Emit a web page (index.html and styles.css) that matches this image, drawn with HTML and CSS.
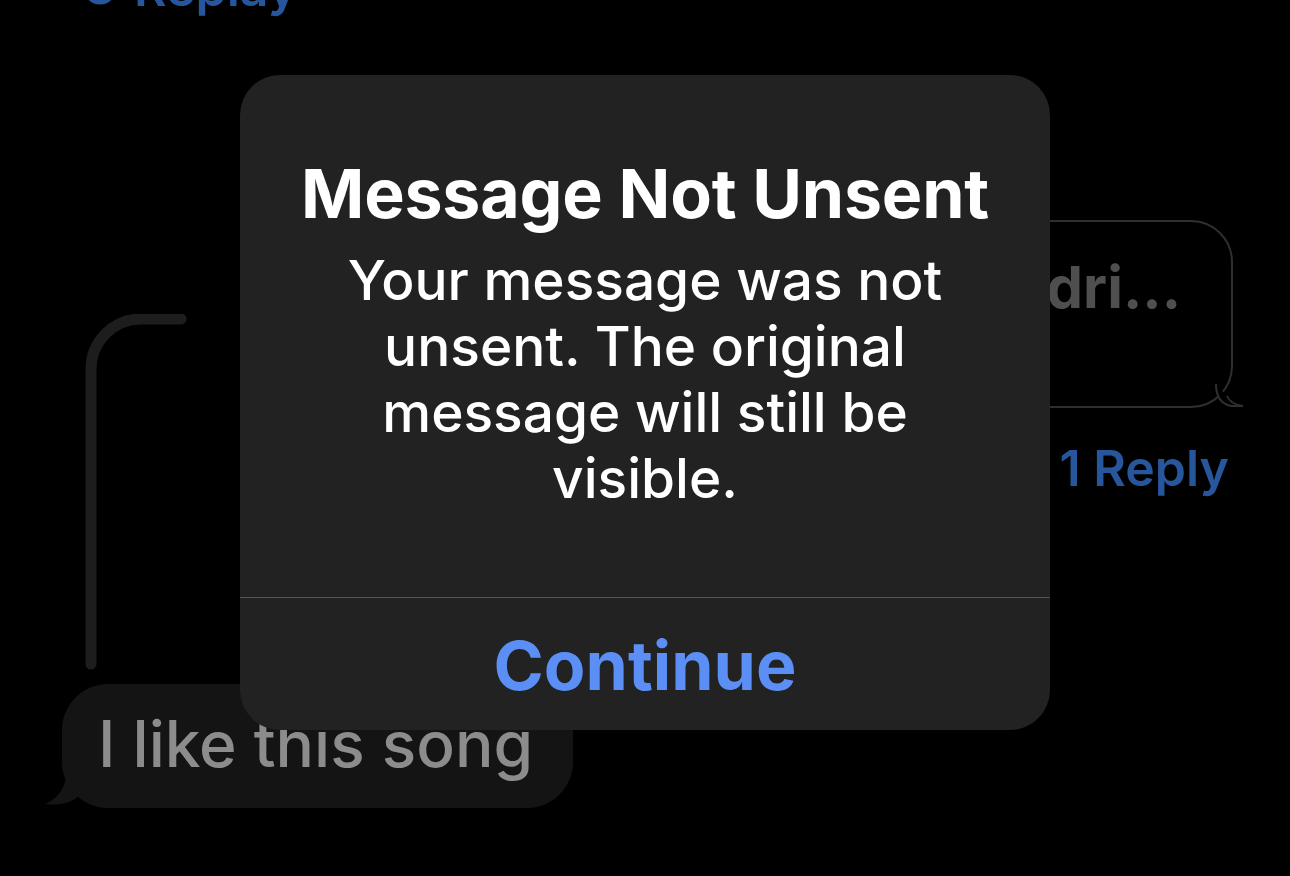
FILE: index.html
```html
<!DOCTYPE html>
<html lang="en">
<head>
<meta charset="utf-8">
<title>Message Not Unsent</title>
<link rel="stylesheet" href="styles.css">
</head>
<body>
<div class="chat">
  <div class="replay-top">
    <svg class="replay-icon" width="40" height="40" viewBox="0 0 40 40"><path d="M6 20 A14 14 0 1 0 20 6 H14" fill="none" stroke="#28569c" stroke-width="5" stroke-linecap="round"/></svg>
    <span>Replay</span>
  </div>
  <div class="thread-row">
    <svg class="thread-line" width="110" height="360" viewBox="0 0 110 360"><path d="M98 5 H58 A50 50 0 0 0 8 55 V350" fill="none" stroke="#1d1d1d" stroke-width="11" stroke-linecap="round"/></svg>
    <div class="right-msg">
      <div class="out-bubble">
        <span class="out-text">dri...</span>
        <svg class="out-tail" width="30" height="24" viewBox="0 0 30 24"><path d="M1 0 C1 12 6 20 16 22 H28 C20 21 14 17 12 12" fill="#000" stroke="#2f2f2f" stroke-width="2"/></svg>
      </div>
      <div class="reply-count">1 Reply</div>
    </div>
  </div>
  <div class="in-bubble">
    <svg class="in-tail" width="40" height="40" viewBox="0 0 40 40"><path d="M22 0 C22 18 14 30 0 36 C14 38 26 35 34 28 L40 0 Z" fill="#141414"/></svg>
    <span>I like this song</span>
  </div>
</div>

<div class="alert" role="alertdialog">
  <div class="alert-content">
    <h1 class="alert-title">Message Not Unsent</h1>
    <p class="alert-message">Your message was not unsent. The original message will still be visible.</p>
  </div>
  <button class="alert-button">Continue</button>
</div>
</body>
</html>
```

FILE: styles.css
```css
* { box-sizing: border-box; }
html, body {
  margin: 0;
  padding: 0;
  background: #000;
  width: 1290px;
  height: 876px;
  overflow: hidden;
  font-family: Inter, "Noto Sans", "Liberation Sans", sans-serif;
}

.chat {
  display: flex;
  flex-direction: column;
  width: 1290px;
}

.replay-top {
  display: flex;
  align-items: center;
  gap: 14px;
  margin-top: -42px;
  padding-left: 80px;
  color: #28569c;
  font-size: 50px;
  font-weight: 600;
  line-height: 60px;
}
.replay-icon { flex: none; }

.thread-row {
  display: grid;
  grid-template-columns: 1fr auto;
  margin-top: 202px;
}
.thread-line {
  margin-top: 94px;
  margin-left: 83px;
}

.right-msg {
  display: flex;
  flex-direction: column;
  align-items: flex-end;
  padding-right: 57px;
}
.out-bubble {
  position: relative;
  width: 520px;
  height: 188px;
  border: 2px solid #2f2f2f;
  border-radius: 42px;
  display: flex;
  justify-content: flex-end;
  padding: 30px 50px 0 0;
}
.out-text {
  color: #4f4f4f;
  font-size: 58px;
  font-weight: 700;
  line-height: 70px;
}
.out-tail {
  position: absolute;
  right: -14px;
  bottom: -2px;
}
.reply-count {
  margin-top: 30px;
  color: #28569c;
  font-size: 50px;
  font-weight: 600;
  line-height: 60px;
  padding-right: 4px;
}

.in-bubble {
  position: relative;
  align-self: flex-start;
  margin-top: 10px;
  margin-left: 62px;
  background: #141414;
  border-radius: 46px;
  padding: 24px 40px 28px 36px;
  color: #8c8c8c;
  font-size: 64px;
  font-weight: 500;
  line-height: 72px;
}
.in-tail {
  position: absolute;
  left: -17px;
  bottom: 0;
}
.in-bubble span { position: relative; }

.alert {
  position: absolute;
  left: 240px;
  top: 75px;
  width: 810px;
  height: 655px;
  background: #222222;
  border-radius: 40px;
  display: flex;
  flex-direction: column;
  overflow: hidden;
}
.alert-content {
  padding: 78px 40px 86px;
  text-align: center;
  color: #fff;
}
.alert-title {
  margin: 0;
  font-size: 68px;
  font-weight: 700;
  line-height: 80px;
  letter-spacing: -0.2px;
}
.alert-message {
  margin: 14px 0 0;
  font-size: 55px;
  font-weight: 500;
  line-height: 66px;
  padding: 0 60px;
}
.alert-button {
  flex: 1;
  border: 0;
  border-top: 1px solid #545454;
  background: transparent;
  color: #5b8ff5;
  font-family: inherit;
  font-size: 68px;
  font-weight: 700;
  padding: 2px 0 0;
  margin: 0;
}
```
